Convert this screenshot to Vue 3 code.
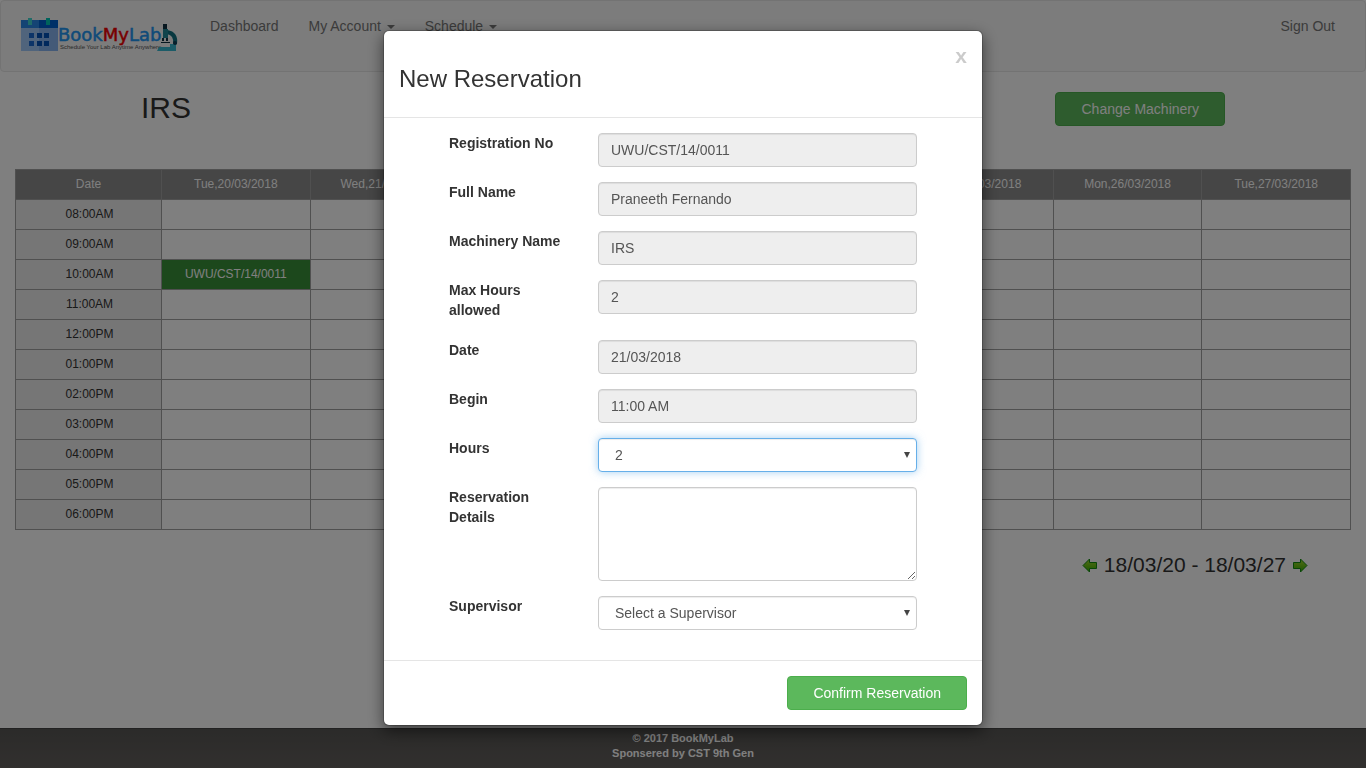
<script setup>
import { ref } from 'vue'

const days = [
  'Tue,20/03/2018', 'Wed,21/03/2018', 'Thu,22/03/2018', 'Fri,23/03/2018',
  'Sat,24/03/2018', 'Sun,25/03/2018', 'Mon,26/03/2018', 'Tue,27/03/2018',
]
const slots = [
  '08:00AM', '09:00AM', '10:00AM', '11:00AM', '12:00PM', '01:00PM',
  '02:00PM', '03:00PM', '04:00PM', '05:00PM', '06:00PM',
]
const bookings = { '10:00AM|Tue,20/03/2018': 'UWU/CST/14/0011' }
const booked = (slot, day) => bookings[`${slot}|${day}`]

const fixedFields = [
  { id: 'reg', label: 'Registration No', value: 'UWU/CST/14/0011' },
  { id: 'name', label: 'Full Name', value: 'Praneeth Fernando' },
  { id: 'machine', label: 'Machinery Name', value: 'IRS' },
  { id: 'max', label: 'Max Hours allowed', value: '2' },
  { id: 'date', label: 'Date', value: '21/03/2018' },
  { id: 'begin', label: 'Begin', value: '11:00 AM' },
]
const hours = ref('2')
const details = ref('')
const supervisor = ref('')
</script>

<template>
  <div class="page">
    <nav class="navbar">
      <a href="#" class="brand" aria-label="BookMyLab">
        <svg width="160" height="38" viewBox="0 0 160 38">
          <rect x="1" y="4" width="37" height="31" fill="#a0c8f8" />
          <rect x="19" y="4" width="19" height="31" fill="#88b4f0" />
          <rect x="1" y="4" width="18" height="8" fill="#2888e8" />
          <rect x="19" y="4" width="19" height="8" fill="#0060d0" />
          <rect x="8" y="2" width="4" height="7" fill="#40d8d0" />
          <rect x="26" y="2" width="4" height="7" fill="#00c8b8" />
          <g fill="#1868d0">
            <rect x="9" y="17" width="5" height="5" /><rect x="9" y="25" width="5" height="5" />
          </g>
          <g fill="#0050b8">
            <rect x="17" y="17" width="5" height="5" /><rect x="24" y="17" width="5" height="5" />
            <rect x="17" y="25" width="5" height="5" /><rect x="24" y="25" width="5" height="5" />
          </g>
          <text x="38" y="25" class="word"><tspan class="blue">Book</tspan><tspan class="red">My</tspan><tspan class="blue">Lab</tspan></text>
          <text x="40" y="33" class="tag">Schedule Your Lab Anytime Anywhere</text>
          <path d="M137 35l2-4h11v-3h6v7z" fill="#38b8d0" />
          <path d="M147 16c6 1 9 5 8 12" fill="none" stroke="#107080" stroke-width="4" />
          <path d="M143 13h5v9h-5z" fill="#208898" />
          <path d="M143 8h4v5h-4zM142 22h2v3h-2zM146 22h2v3h-2zM141 26h9v1h-9z" fill="#103040" />
          <circle cx="155" cy="27" r="2" fill="#104058" />
        </svg>
      </a>
      <a href="#" class="nav-link">Dashboard</a>
      <a href="#" class="nav-link">My Account <span class="caret"></span></a>
      <a href="#" class="nav-link">Schedule <span class="caret"></span></a>
      <a href="#" class="nav-link sign-out">Sign Out</a>
    </nav>

    <header class="title-row">
      <h2>IRS</h2>
      <button type="button" class="btn">Change Machinery</button>
    </header>

    <main class="schedule">
      <table>
        <thead>
          <tr>
            <th class="time-col" scope="col">Date</th>
            <th v-for="day in days" :key="day" scope="col">{{ day }}</th>
          </tr>
        </thead>
        <tbody>
          <tr v-for="slot in slots" :key="slot">
            <th scope="row">{{ slot }}</th>
            <td v-for="day in days" :key="day" :class="{ booked: booked(slot, day) }">{{ booked(slot, day) }}</td>
          </tr>
        </tbody>
      </table>
    </main>

    <div class="range">
      <a href="#" aria-label="Previous">
        <svg width="16" height="16" viewBox="0 0 16 16">
          <defs>
            <linearGradient id="arrowFill" x1="0" y1="0" x2="0" y2="1">
              <stop offset="0" stop-color="#a8d830" /><stop offset="1" stop-color="#38b000" />
            </linearGradient>
          </defs>
          <path d="M1 8.500L7.500 2V5.500H14.500V11.500H7.500V15z" fill="url(#arrowFill)" stroke="#108c10" />
        </svg>
      </a>
      <span>18/03/20 - 18/03/27</span>
      <a href="#" aria-label="Next">
        <svg width="16" height="16" viewBox="0 0 16 16">
          <path d="M15 8.500L8.500 2V5.500H1.500V11.500H8.500V15z" fill="url(#arrowFill)" stroke="#108c10" />
        </svg>
      </a>
    </div>

    <footer class="site-footer">© 2017 BookMyLab<br>Sponsered by CST 9th Gen</footer>

    <div class="backdrop">
      <form class="modal" role="dialog" aria-labelledby="dialog-title" @submit.prevent>
        <div class="modal-header">
          <h3 id="dialog-title">New Reservation</h3>
          <button type="button" class="close" aria-label="Close">x</button>
        </div>
        <div class="modal-body">
          <div v-for="f in fixedFields" :key="f.id" class="field">
            <label :for="f.id">{{ f.label }}</label>
            <input :id="f.id" class="control" type="text" :value="f.value" readonly>
          </div>
          <div class="field">
            <label for="hours">Hours</label>
            <div class="select-wrap">
              <select id="hours" v-model="hours" class="control active">
                <option>1</option>
                <option>2</option>
              </select>
              <svg class="arrow" width="6" height="6" viewBox="0 0 6 6"><path d="M0 0h6L3 6z" fill="#444" /></svg>
            </div>
          </div>
          <div class="field">
            <label for="details">Reservation Details</label>
            <textarea id="details" v-model="details" class="control" rows="4"></textarea>
          </div>
          <div class="field">
            <label for="supervisor">Supervisor</label>
            <div class="select-wrap">
              <select id="supervisor" v-model="supervisor" class="control">
                <option value="">Select a Supervisor</option>
              </select>
              <svg class="arrow" width="6" height="6" viewBox="0 0 6 6"><path d="M0 0h6L3 6z" fill="#444" /></svg>
            </div>
          </div>
        </div>
        <div class="modal-footer">
          <button type="submit" class="btn">Confirm Reservation</button>
        </div>
      </form>
    </div>
  </div>
</template>

<style>
body {
  margin: 0;
  background: #fff;
}
</style>

<style scoped>
.page {
  display: flex;
  flex-direction: column;
  min-height: 100vh;
  font: 14px/20px "Liberation Sans", Arial, sans-serif;
  color: #333;
}
.page *,
.page {
  box-sizing: border-box;
}
.navbar {
  display: flex;
  align-items: flex-start;
  height: 72px;
  padding: 0 15px;
  border: 1px solid #e7e7e7;
  border-radius: 4px;
  background: #f8f8f8;
}
.brand {
  margin: 15px 15px 0 4px;
}
.brand svg {
  display: block;
}
.word {
  font: 18px "DejaVu Sans", sans-serif;
  stroke-width: 0.5px;
}
.blue {
  fill: #2196f3;
  stroke: #2196f3;
}
.red {
  fill: #f00000;
  stroke: #f00000;
}
.tag {
  font: 6px "Liberation Sans", Arial, sans-serif;
  fill: #555;
}
.nav-link {
  padding: 15px;
  color: #777;
  text-decoration: none;
}
.caret {
  display: inline-block;
  margin-left: 2px;
  vertical-align: middle;
  border-top: 4px solid;
  border-right: 4px solid transparent;
  border-left: 4px solid transparent;
}
.sign-out {
  margin-left: auto;
}
.title-row {
  display: flex;
  align-items: flex-start;
  justify-content: space-between;
  margin-top: 20px;
  padding: 0 141px;
}
h2 {
  margin: 0;
  font-size: 30px;
  line-height: 32px;
  font-weight: 400;
}
.btn {
  height: 34px;
  padding: 6px 25px;
  border: 1px solid #4cae4c;
  border-radius: 4px;
  background: #5cb85c;
  color: #fff;
  font: inherit;
}
.schedule {
  margin-top: 43px;
  padding: 0 15px;
}
table {
  width: 100%;
  table-layout: fixed;
  border-collapse: collapse;
  font-size: 12px;
  text-align: center;
}
th,
td {
  height: 30px;
  padding: 0 0 2px;
  border: 1px solid #a0a0a0;
  font-weight: 400;
}
thead th {
  background: #8c8c8c;
  color: #fff;
}
tbody th {
  background: #ececec;
  padding-left: 2px;
}
.time-col {
  width: 146px;
}
.booked {
  background: #389038;
  color: #fff;
}
.range {
  display: flex;
  align-items: center;
  justify-content: flex-end;
  gap: 6px;
  margin-top: 23px;
  padding-right: 58px;
  font-size: 21px;
  line-height: 23px;
}
.range svg {
  display: block;
}
.site-footer {
  height: 40px;
  margin-top: auto;
  padding-top: 2px;
  border-top: 1px solid #444;
  background: linear-gradient(#575654, #64605d);
  color: #fff;
  font-size: 11px;
  font-weight: 700;
  line-height: 15px;
  text-align: center;
}
.backdrop {
  position: fixed;
  inset: 0;
  overflow: auto;
  padding: 30px 0;
  background: rgba(0, 0, 0, 0.5);
}
.modal {
  width: 600px;
  max-width: 100%;
  margin: 0 auto;
  border: 1px solid rgba(0, 0, 0, 0.2);
  border-radius: 6px;
  background: #fff;
  background-clip: padding-box;
  box-shadow: 0 5px 15px rgba(0, 0, 0, 0.5);
}
.modal-header {
  display: flex;
  align-items: flex-start;
  justify-content: space-between;
  padding: 15px;
  border-bottom: 1px solid #e5e5e5;
}
h3 {
  margin: 20px 0 10px;
  font-size: 24px;
  line-height: 26px;
  font-weight: 400;
}
.close {
  padding: 0;
  border: 0;
  background: none;
  color: #000;
  font: 700 21px/19px "Liberation Sans", Arial, sans-serif;
  opacity: 0.2;
}
.modal-body {
  display: flex;
  flex-direction: column;
  gap: 15px;
  padding: 15px 65px 30px;
}
.field {
  display: grid;
  grid-template-columns: 119px 1fr;
  column-gap: 30px;
  align-items: start;
}
label {
  margin-bottom: 5px;
  font-weight: 700;
}
.control {
  display: block;
  width: 100%;
  height: 34px;
  margin: 0;
  padding: 6px 12px;
  border: 1px solid #ccc;
  border-radius: 4px;
  background: #fff;
  box-shadow: inset 0 1px 1px rgba(0, 0, 0, 0.075);
  color: #555;
  font: inherit;
  outline: 0;
}
.control[readonly] {
  background: #eee;
}
textarea.control {
  height: auto;
}
.select-wrap {
  position: relative;
}
select.control {
  padding-left: 16px;
  appearance: none;
}
.control.active {
  border-color: #66afe9;
  box-shadow: inset 0 1px 1px rgba(0, 0, 0, 0.075), 0 0 8px rgba(102, 175, 233, 0.6);
}
.arrow {
  position: absolute;
  top: 14px;
  right: 7px;
  pointer-events: none;
}
.modal-footer {
  padding: 15px;
  border-top: 1px solid #e5e5e5;
  text-align: right;
}
.modal-footer .btn {
  display: block;
  margin-left: auto;
}
</style>
